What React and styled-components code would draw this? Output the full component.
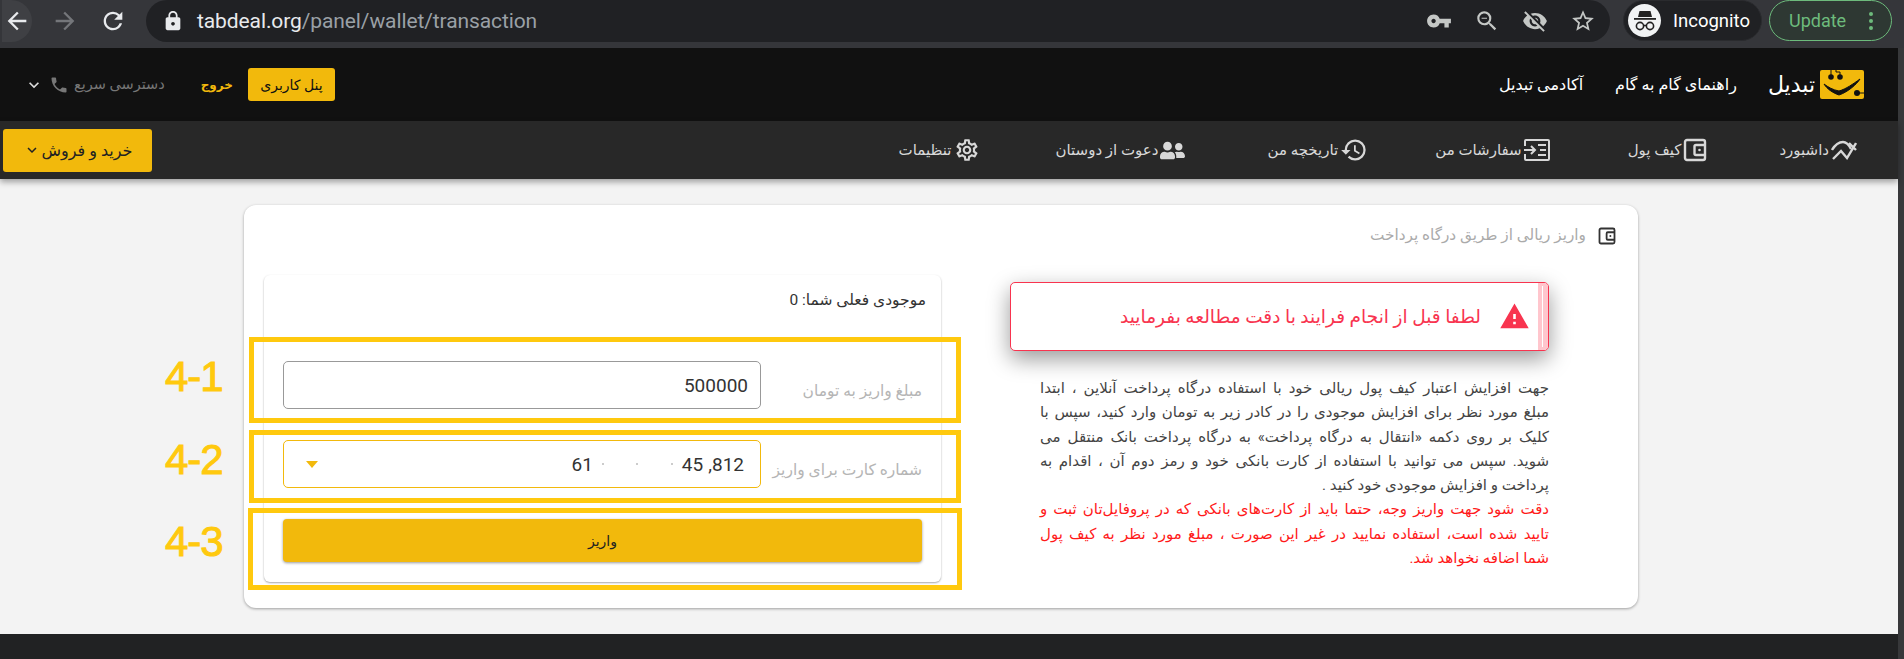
import React from 'react';
import styled, { createGlobalStyle } from 'styled-components';
import { MdArrowBack, MdArrowForward, MdRefresh, MdLock, MdVpnKey, MdZoomOut, MdVisibilityOff, MdStarBorder, MdWarning, MdHistory, MdOutlineSettings, MdKeyboardArrowDown, MdPhone } from 'react-icons/md';
import { FaUserFriends } from 'react-icons/fa';

const FA = `Roboto, "DejaVu Sans", sans-serif`;

const Global = createGlobalStyle`
  html, body { margin: 0; padding: 0; background: #f3f3f3; overflow: hidden; }
  * { box-sizing: border-box; }
  body { font-family: ${FA}; }
`;

const Page = styled.div`
  position: relative; width: 1904px; height: 659px; display: flex; flex-direction: column; overflow: hidden;
`;
const Chrome = styled.div`
  height: 48px; flex: none; background: #35363a; display: flex; align-items: flex-start; color: #e8eaed;
  font-family: Roboto, sans-serif;
`;
const NavButtons = styled.div`
  width: 146px; height: 42px; flex: none; display: flex; align-items: center; padding-left: 2px; gap: 18px;
`;
const RoundBtn = styled.div`
  width: 30px; height: 42px; display: flex; align-items: center; justify-content: center;
  color: ${p => (p.$dim ? '#74767a' : '#e8eaed')}; font-size: 28px;
  background: ${p => (p.$hover ? '#3f4044' : 'transparent')};
  border-radius: ${p => (p.$hover ? '0 21px 21px 0' : '0')};
`;
const Omnibox = styled.div`
  width: 1464px; height: 42px; flex: none; background: #202124; border-radius: 21px; display: flex; align-items: center;
  padding: 0 14px 0 16px; color: #e8eaed; font-size: 22px;
`;
const Url = styled.div`
  flex: 1; margin-left: 13px; font-size: 21px; white-space: nowrap; letter-spacing: -0.1px;
  span { color: #9aa0a6; }
`;
const OmniIcons = styled.div`
  display: flex; align-items: center; gap: 22px; color: #c4c7c5; font-size: 26px;
`;
const IncognitoPill = styled.div`
  margin-left: 13px; width: 139px; height: 41px; background: #202124; border-radius: 21px; border: 1px solid #2a2b2e;
  display: flex; align-items: center; padding-left: 4px; gap: 12px; font-size: 18.500px; color: #fff;
`;
const IncogCircle = styled.div`
  width: 33px; height: 33px; border-radius: 50%; background: #f1f3f4; display: flex; align-items: center; justify-content: center; flex: none;
`;
const UpdatePill = styled.div`
  margin-left: 7px; width: 123px; height: 41px; border-radius: 21px; border: 1.5px solid #6dbb7c; background: #2e3833;
  display: flex; align-items: center; justify-content: space-between; padding: 0 18px 0 19px; font-size: 18px; color: #6dbb7c;
`;
const Dots = styled.div`
  display: flex; flex-direction: column; gap: 3px;
  i { width: 4px; height: 4px; border-radius: 50%; background: #6dbb7c; display: block; }
`;
const Body = styled.div`
  flex: 1; min-height: 0; display: flex; direction: ltr;
`;
const Main = styled.div`
  flex: 1; min-width: 0; display: flex; flex-direction: column; direction: rtl;
`;
const Scrollbar = styled.div`
  width: 6px; flex: none; background: #37383a;
`;
const TopBar = styled.div`
  height: 73px; flex: none; background: #111; display: flex; align-items: center; justify-content: space-between; padding: 0 34px 0 24px;
`;
const TopGroup = styled.div`
  display: flex; align-items: center;
`;
const Logo = styled.div`
  display: flex; align-items: center; gap: 5px; color: #fff; font-size: 22px; margin-left: 31px;
`;
const TopLink = styled.a`
  color: #fff; font-size: 16px; margin-left: 32px; white-space: nowrap;
`;
const PanelButton = styled.div`
  width: 87px; height: 33px; background: #f2b90c; border-radius: 3px; color: #111; font-size: 14px;
  display: flex; align-items: center; justify-content: center; white-space: nowrap;
`;
const Logout = styled.a`
  color: #f2b90c; font-size: 12px; font-weight: 700; margin: 0 15px;
`;
const QuickAccess = styled.div`
  display: flex; align-items: center; gap: 5px; color: #777; font-size: 14.500px; margin-right: 21px; white-space: nowrap;
`;
const NavBar = styled.div`
  position: relative; z-index: 1; height: 58px; flex: none; background: #282828; display: flex; align-items: center; padding: 0 41px 0 3px;
  box-shadow: 0 3px 6px rgba(0, 0, 0, .35);
`;
const NavItems = styled.div`
  display: flex; align-items: center;
`;
const NavItem = styled.a`
  display: flex; align-items: center; gap: 2px; color: #d8d8d8; font-size: 15px; white-space: nowrap;
  margin-left: ${p => p.$after}px;
  svg { flex: none; }
`;
const BuyButton = styled.div`
  margin-right: auto; width: 149px; height: 43px; background: #f2b90c; border-radius: 3px; color: #222;
  display: flex; align-items: center; justify-content: center; gap: 1px; font-size: 16px; white-space: nowrap;
`;
const Content = styled.div`
  flex: 1; min-height: 0; background: #f3f3f3; padding: 26px 260px 0 244px;
`;
const Card = styled.div`
  height: 403px; background: #fff; border-radius: 12px; box-shadow: 0 1px 3px rgba(0, 0, 0, .35); padding: 0 22px 0 20px;
`;
const CardHead = styled.div`
  height: 70px; display: flex; align-items: flex-start; padding-top: 21px; gap: 12px; color: #aaa; font-size: 15.300px; white-space: nowrap;
  svg { margin-top: 1px; }
`;
const Columns = styled.div`
  display: flex; gap: 69px; padding-right: 67px;
`;
const InfoColumn = styled.div`
  width: 539px; flex: none; padding-top: 7px;
`;
const Alert = styled.div`
  height: 69px; border: 1px solid #f8344f; border-radius: 5px; background: #fff; display: flex; align-items: center; color: #f8344f;
  font-size: 18.500px; box-shadow: 0 8px 22px rgba(0, 0, 0, .4); white-space: nowrap;
`;
const AlertStripe = styled.div`
  position: relative; width: 10px; align-self: stretch; background: #ffc6cd; border-radius: 0 4px 4px 0; flex: none;
  &::after { content: ''; position: absolute; top: 3px; bottom: 3px; left: 4px; width: 1px; background: #fff; }
`;
const AlertIcon = styled.div`
  color: #f8344f; font-size: 31px; display: flex; margin: 0 8px 0 18px;
`;
const Paragraph = styled.div`
  margin-top: 25px; padding-left: 30px; font-size: 15px; line-height: 24.300px;
`;
const Line = styled.div`
  color: ${p => (p.$red ? '#ff1a1a' : '#444')}; white-space: nowrap;
  text-align: right; text-align-last: ${p => (p.$last ? 'right' : 'justify')};
`;
const FormCard = styled.div`
  width: 677px; height: 307px; flex: none; background: #fff; border-radius: 6px; box-shadow: 0 1px 2px rgba(0, 0, 0, .35); padding: 0 19px 20px;
  display: flex; flex-direction: column;
`;
const Balance = styled.div`
  height: 86px; padding-top: 16px; font-size: 15.500px; color: #333; margin-right: -4px;
`;
const FieldRow = styled.div`
  display: flex; align-items: flex-end; justify-content: space-between; height: 48px; margin-bottom: 31px;
`;
const FieldLabel = styled.label`
  color: #b5b5b5; font-size: 15.500px; padding-bottom: 9px; white-space: nowrap;
`;
const FieldBox = styled.div`
  width: 478px; height: 48px; border-radius: 5px; border: 1px solid ${p => (p.$active ? '#f2b90c' : '#999')};
  display: flex; align-items: center; justify-content: space-between; direction: ltr; padding: 0 ${p => (p.$active ? 16 : 12)}px 0 22px;
  font-family: Roboto, sans-serif; font-size: 19px; color: #333;
`;
const Caret = styled.div`
  width: 0; height: 0; border-left: 6px solid transparent; border-right: 6px solid transparent; border-top: 7px solid #f2b90c;
`;
const CardDigits = styled.div`
  display: flex; align-items: center; gap: 5px;
`;
const Masked = styled.div`
  width: ${p => p.$w}px; display: flex; justify-content: space-between; padding: 0 4px;
  i { width: 2px; height: 2px; background: #ccc; display: block; }
`;
const SubmitButton = styled.div`
  height: 43px; background: #f2b90c; border-radius: 4px; box-shadow: 0 1px 3px rgba(0, 0, 0, .4); color: #222;
  display: flex; align-items: center; justify-content: center; font-size: 14px;
`;
const Footer = styled.div`
  height: 25px; flex: none; background: #212223;
`;
const Marker = styled.div`
  position: absolute; left: ${p => p.$x}px; top: ${p => p.$y}px; width: ${p => p.$w}px; height: ${p => p.$h}px;
  border: 5px solid #ffc90e; pointer-events: none;
`;
const MarkerLabel = styled.div`
  position: absolute; left: 165px; top: ${p => p.$y}px; height: 50px; line-height: 50px; color: #ffc90e;
  font-family: "Liberation Sans", sans-serif; font-size: 42px; letter-spacing: -1px; direction: ltr;
  -webkit-text-stroke: 1px #ffc90e;
`;

const TabdealLogo = () => (
  <svg width="44" height="29" viewBox="0 0 44 29">
    <rect width="44" height="29" rx="2" fill="#f2b90c" />
    <path d="M4 14c4 3 9 6 15 7 7-2 14-7 21-12-3 5-12 13-21 16-6-2-12-6-15-11z" fill="#111" stroke="#111" strokeWidth="1" strokeLinejoin="round" />
    <circle cx="11" cy="7" r="2.800" fill="#111" /><circle cx="20" cy="7" r="2.800" fill="#111" />
    <path d="M11 0v5M16 0v2h4v3" stroke="#111" strokeWidth="1" fill="none" />
    <circle cx="37" cy="23" r="3" fill="#111" /><path d="M37 23h7" stroke="#111" strokeWidth="1" />
  </svg>
);
const DashIcon = () => (
  <svg width="26" height="20" viewBox="0 0 26 20" fill="none" stroke="#d8d8d8" strokeWidth="2.400">
    <path d="M1 10C4 5 8 2 12 2c3 0 6 3 8 7" />
    <path d="M2 19l8-8 6 7 9-15M18 3l7 7" strokeWidth="2.400" />
  </svg>
);
const WalletIcon = ({ size = 24, color = '#d8d8d8' }) => (
  <svg width={size} height={size} viewBox="0 0 24 24" fill="none" stroke={color} strokeWidth="2.400">
    <rect x="2" y="2" width="20" height="20" rx="2" />
    <path d="M22 7H13a1.500 1.500 0 0 0-1.500 1.500v7A1.500 1.500 0 0 0 13 17h9" />
    <circle cx="16.500" cy="12" r="1.300" fill={color} stroke="none" />
  </svg>
);
const OrdersIcon = () => (
  <svg width="26" height="22" viewBox="0 0 26 22" fill="none" stroke="#d8d8d8" strokeWidth="2">
    <path d="M1 7V2a1 1 0 0 1 1-1h22a1 1 0 0 1 1 1v18a1 1 0 0 1-1 1H2a1 1 0 0 1-1-1v-5" />
    <path d="M0 11h10M7 7l4 4-4 4" />
    <path d="M14 6h8M16 11h6M14 16h8" strokeWidth="2.200" />
  </svg>
);
const IncognitoIcon = () => (
  <svg width="26" height="26" viewBox="0 0 26 26" fill="#222">
    <path d="M7.500 3h11l1.500 6H6z" /><rect x="2" y="10" width="22" height="1.800" />
    <circle cx="8" cy="18" r="3.600" fill="none" stroke="#222" strokeWidth="1.600" />
    <circle cx="18" cy="18" r="3.600" fill="none" stroke="#222" strokeWidth="1.600" />
    <path d="M11.500 17.500h3" stroke="#222" strokeWidth="1.600" />
  </svg>
);

const info = [
  'جهت افزایش اعتبار کیف پول ریالی خود با استفاده درگاه پرداخت آنلاین ، ابتدا',
  'مبلغ مورد نظر برای افزایش موجودی را در کادر زیر به تومان وارد کنید، سپس با',
  'کلیک بر روی دکمه «انتقال به درگاه پرداخت» به درگاه پرداخت بانک منتقل می',
  'شوید. سپس می توانید با استفاده از کارت بانکی خود و رمز دوم آن ، اقدام به',
];
const warn = [
  'دقت شود جهت واریز وجه، حتما باید از کارت‌های بانکی که در پروفایل‌تان ثبت و',
  'تایید شده است، استفاده نمایید در غیر این صورت ، مبلغ مورد نظر به کیف پول',
];

export default function App() {
  return (
    <Page>
      <Global />
      <Chrome>
        <NavButtons>
          <RoundBtn $hover><MdArrowBack /></RoundBtn>
          <RoundBtn $dim><MdArrowForward /></RoundBtn>
          <RoundBtn><MdRefresh /></RoundBtn>
        </NavButtons>
        <Omnibox>
          <MdLock />
          <Url>tabdeal.org<span>/panel/wallet/transaction</span></Url>
          <OmniIcons>
            <MdVpnKey /><MdZoomOut /><MdVisibilityOff /><MdStarBorder />
          </OmniIcons>
        </Omnibox>
        <IncognitoPill>
          <IncogCircle><IncognitoIcon /></IncogCircle>
          Incognito
        </IncognitoPill>
        <UpdatePill>Update<Dots><i /><i /><i /></Dots></UpdatePill>
      </Chrome>
      <Body>
        <Main>
          <TopBar>
            <TopGroup>
              <Logo><TabdealLogo />تبدیل</Logo>
              <TopLink>راهنمای گام به گام</TopLink>
              <TopLink>آکادمی تبدیل</TopLink>
            </TopGroup>
            <TopGroup>
              <PanelButton>پنل کاربری</PanelButton>
              <Logout>خروج</Logout>
              <QuickAccess>
                دسترسی سریع
                <MdPhone size={20} />
                <MdKeyboardArrowDown size={20} color="#ddd" />
              </QuickAccess>
            </TopGroup>
          </TopBar>
          <NavBar>
            <NavItems>
              <NavItem $after={72}><DashIcon />داشبورد</NavItem>
              <NavItem $after={78}><WalletIcon />کیف پول</NavItem>
              <NavItem $after={67}><OrdersIcon />سفارشات من</NavItem>
              <NavItem $after={82}><MdHistory size={28} />تاریخچه من</NavItem>
              <NavItem $after={76}><FaUserFriends size={25} />دعوت از دوستان</NavItem>
              <NavItem $after={0}><MdOutlineSettings size={26} />تنظیمات</NavItem>
            </NavItems>
            <BuyButton>خرید و فروش<MdKeyboardArrowDown size={18} /></BuyButton>
          </NavBar>
          <Content>
            <Card>
              <CardHead><WalletIcon size={18} color="#333" />واریز ریالی از طریق درگاه پرداخت</CardHead>
              <Columns>
                <InfoColumn>
                  <Alert>
                    <AlertStripe />
                    <AlertIcon><MdWarning /></AlertIcon>
                    لطفا قبل از انجام فرایند با دقت مطالعه بفرمایید
                  </Alert>
                  <Paragraph>
                    {info.map(t => <Line key={t}>{t}</Line>)}
                    <Line $last>پرداخت و افزایش موجودی خود کنید .</Line>
                    {warn.map(t => <Line $red key={t}>{t}</Line>)}
                    <Line $red $last>شما اضافه نخواهد شد.</Line>
                  </Paragraph>
                </InfoColumn>
                <FormCard>
                  <Balance>موجودی فعلی شما: 0</Balance>
                  <FieldRow>
                    <FieldLabel>مبلغ واریز به تومان</FieldLabel>
                    <FieldBox><span />500000</FieldBox>
                  </FieldRow>
                  <FieldRow>
                    <FieldLabel>شماره کارت برای واریز</FieldLabel>
                    <FieldBox $active>
                      <Caret />
                      <CardDigits>
                        <span>61</span><Masked $w={79}><i /><i /><i /></Masked><span>45</span><span>,812</span>
                      </CardDigits>
                    </FieldBox>
                  </FieldRow>
                  <SubmitButton>واریز</SubmitButton>
                </FormCard>
              </Columns>
            </Card>
          </Content>
          <Footer />
        </Main>
        <Scrollbar />
      </Body>
      <Marker $x={249} $y={337} $w={712} $h={86} />
      <Marker $x={249} $y={430} $w={712} $h={73} />
      <Marker $x={248} $y={508} $w={714} $h={82} />
      <MarkerLabel $y={352}>4-1</MarkerLabel>
      <MarkerLabel $y={435}>4-2</MarkerLabel>
      <MarkerLabel $y={517}>4-3</MarkerLabel>
    </Page>
  );
}
